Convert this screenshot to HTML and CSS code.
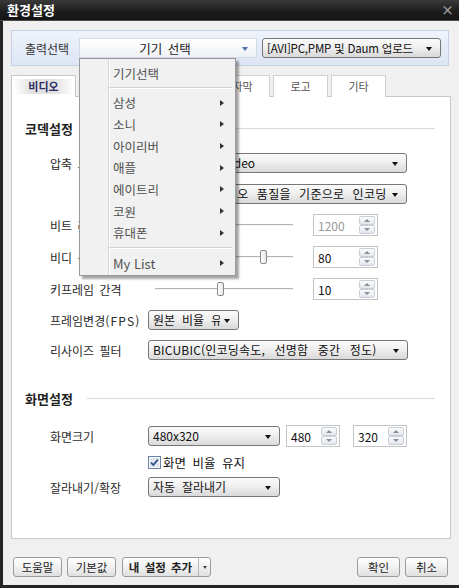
FILE: index.html
```html
<!DOCTYPE html>
<html lang="ko">
<head>
<meta charset="utf-8">
<title>환경설정</title>
<link rel="stylesheet" href="styles.css">
</head>
<body>
<div class="window">
  <div class="titlebar">
    <span class="title">환경설정</span>
    <span class="close">×</span>
  </div>
  <div class="client">
    <div class="outbar">
      <span class="outlabel">출력선택</span>
      <div class="devcombo">
        <span class="devtext">기기 선택</span>
        <i class="bluearrow"></i>
        <div class="menu">
          <div class="mi"><span>기기선택</span></div>
          <div class="msep"></div>
          <div class="mi"><span>삼성</span><i class="sub"></i></div>
          <div class="mi"><span>소니</span><i class="sub"></i></div>
          <div class="mi"><span>아이리버</span><i class="sub"></i></div>
          <div class="mi"><span>애플</span><i class="sub"></i></div>
          <div class="mi"><span>에이트리</span><i class="sub"></i></div>
          <div class="mi"><span>코원</span><i class="sub"></i></div>
          <div class="mi"><span>휴대폰</span><i class="sub"></i></div>
          <div class="msep sep2"></div>
          <div class="mi"><span class="latin">My List</span><i class="sub"></i></div>
        </div>
      </div>
      <div class="combo preset"><span class="ctext ptext">[AVI]PC,PMP 및 Daum 업로드</span><i class="arrow"></i></div>
    </div>

    <div class="tabs">
      <div class="tab sel"><span class="selband">비디오</span></div>
      <div class="tab wide">오디오</div>
      <div class="tab wide">인코딩</div>
      <div class="tab">자막</div>
      <div class="tab">로고</div>
      <div class="tab">기타</div>
    </div>

    <div class="panel">
      <div class="sect"><span class="sname">코덱설정</span><span class="sline"></span></div>

      <div class="row r1">
        <span class="lbl">압축 코덱</span>
        <div class="combo w259"><span class="ctext tight">XviD MPEG4 Video</span><i class="arrow"></i></div>
      </div>
      <div class="row r2">
        <span class="lbl"></span>
        <div class="combo w259"><span class="ctext loose">품질 고정 비디오 품질을 기준으로 인코딩</span><i class="arrow"></i></div>
      </div>
      <div class="row r3">
        <span class="lbl">비트 레이트</span>
        <div class="slider"><div class="track"><i class="thumb t-bit"></i></div></div>
        <div class="spin w65 dis"><span class="sv">1200</span><div class="sbtns"><i class="up"></i><i class="dn"></i></div></div>
      </div>
      <div class="row r3">
        <span class="lbl">비디 품질</span>
        <div class="slider"><div class="track"><i class="thumb t-q"></i></div></div>
        <div class="spin w65"><span class="sv">80</span><div class="sbtns"><i class="up"></i><i class="dn"></i></div></div>
      </div>
      <div class="row r3">
        <span class="lbl">키프레임 간격</span>
        <div class="slider"><div class="track"><i class="thumb t-k"></i></div></div>
        <div class="spin w65"><span class="sv">10</span><div class="sbtns"><i class="up"></i><i class="dn"></i></div></div>
      </div>
      <div class="row r3">
        <span class="lbl">프레임변경<span class="lat">(FPS)</span></span>
        <div class="combo w91"><span class="ctext">원본 비율 유지</span><i class="arrow"></i></div>
      </div>
      <div class="row r3">
        <span class="lbl">리사이즈 필터</span>
        <div class="combo w260"><span class="ctext wide">BICUBIC(인코딩속도, 선명함 중간 정도)</span><i class="arrow"></i></div>
      </div>

      <div class="sect s2"><span class="sname">화면설정</span><span class="sline"></span></div>

      <div class="row r8">
        <span class="lbl">화면크기</span>
        <div class="combo w132"><span class="ctext">480x320</span><i class="arrow"></i></div>
        <div class="spin w54 m6"><span class="sv">480</span><div class="sbtns"><i class="up"></i><i class="dn"></i></div></div>
        <div class="spin w54 m13"><span class="sv">320</span><div class="sbtns"><i class="up"></i><i class="dn"></i></div></div>
      </div>
      <div class="row r9">
        <span class="lbl"></span>
        <span class="chk"><svg width="13" height="13" viewBox="0 0 13 13"><rect x="0.5" y="0.5" width="12" height="12" fill="#f4f6f9" stroke="#6b84a8"/><rect x="2" y="2" width="9" height="9" fill="#dfe6f0"/><path d="M3 6.5 L5.3 9 L10 3.5" fill="none" stroke="#2a4c86" stroke-width="1.8"/></svg></span>
        <span class="chklbl">화면 비율 유지</span>
      </div>
      <div class="row r10">
        <span class="lbl">잘라내기/확장</span>
        <div class="combo w132"><span class="ctext">자동 잘라내기</span><i class="arrow"></i></div>
      </div>
    </div>

    <div class="footer">
      <button class="btn b49">도움말</button>
      <button class="btn b49 g5">기본값</button>
      <button class="btn split g6"><span class="splitmain">내 설정 추가</span><span class="splitarrow"><i class="arrow small"></i></span></button>
      <span class="spacer"></span>
      <button class="btn b43">확인</button>
      <button class="btn b43 g5">취소</button>
    </div>
  </div>
</div>
</body>
</html>
```

FILE: styles.css
```css
* { box-sizing: border-box; }
html, body { margin: 0; padding: 0; }
body {
  width: 459px;
  height: 588px;
  overflow: hidden;
  font-family: "Noto Sans CJK KR", "Noto Sans", sans-serif;
  font-size: 12px;
  color: #222;
}
.window {
  width: 459px;
  height: 588px;
  background: #262626;
  display: flex;
  flex-direction: column;
}
.titlebar {
  height: 21px;
  background: linear-gradient(#3a3a3a, #1c1c1c 60%, #141414);
  display: flex;
  align-items: center;
  justify-content: space-between;
  padding: 0 5px 1px 7px;
  border-bottom: 1px solid #4a4a4a;
}
.title {
  color: #fff;
  font-weight: bold;
  font-size: 13px;
  line-height: 16px;
}
.close {
  color: #9a9a9a;
  font-size: 13px;
  font-weight: bold;
  line-height: 13px;
}
.client {
  flex: 1;
  margin: 0 0 3px 3px;
  background: #f0f0f0;
  display: flex;
  flex-direction: column;
  padding: 9px 8px 0 8px;
}
/* output select bar */
.outbar {
  height: 36px;
  margin-right: 2px;
  border: 1px solid #c6d1e4;
  background: linear-gradient(#eef3fb, #dde6f5);
  display: flex;
  align-items: center;
  padding-left: 13px;
}
.outlabel {
  width: 54px;
  color: #333;
  font-size: 12px;
}
.devcombo {
  position: relative;
  width: 178px;
  height: 20px;
  border: 1px solid #d3dae6;
  background: linear-gradient(#ffffff, #eef1f6);
  display: flex;
  align-items: center;
  padding-right: 8px;
}
.devtext {
  flex: 1;
  text-align: center;
  font-size: 12.5px;
  color: #222;
  padding-left: 8px;
  word-spacing: 2px;
}
.bluearrow {
  width: 0;
  height: 0;
  border-left: 3.5px solid transparent;
  border-right: 3.5px solid transparent;
  border-top: 4px solid #4f6fa6;
  margin-top: 2px;
}
.preset {
  width: 179px;
  margin-left: 5px;
  border-color: #6d6d6d;
}
/* dropdown menu */
.menu {
  position: absolute;
  top: 19px;
  left: -1px;
  width: 157px;
  height: 218px;
  background: linear-gradient(90deg, #f1f1f1 28px, #d9d9d9 28px, #d9d9d9 29px, #ffffff 29px, #ffffff 30px, #f1f1f1 30px);
  border: 1px solid #9a9a9a;
  box-shadow: 3px 3px 2px rgba(0, 0, 0, 0.35);
  padding-top: 3px;
  z-index: 10;
}
.mi {
  height: 21.67px;
  display: flex;
  align-items: center;
  justify-content: space-between;
  padding: 0 11px 0 33px;
  color: #505050;
  font-size: 12.5px;
}
.mi:first-child { height: 22px; }
.latin { font-size: 13px; }
.sub {
  width: 0;
  height: 0;
  border-top: 3.5px solid transparent;
  border-bottom: 3.5px solid transparent;
  border-left: 4px solid #333;
}
.msep {
  height: 8px;
  margin: 0 3px 0 29px;
  background: linear-gradient(transparent 3px, #d4d4d4 3px, #d4d4d4 4px, #ffffff 4px, #ffffff 5px, transparent 5px);
}
.sep2 { height: 9px; }
/* tabs */
.tabs {
  display: flex;
  gap: 3px;
  margin-top: 9px;
  height: 21px;
  position: relative;
  z-index: 1;
}
.tab {
  width: 55px;
  height: 22px;
  border: 1px solid #d0d0d0;
  border-bottom: none;
  background: #fff;
  color: #555;
  font-size: 11px;
  display: flex;
  align-items: center;
  justify-content: center;
  padding-bottom: 1px;
}
.tab.wide { width: 65px; }
.tab.sel {
  width: 65px;
  border-color: #c8c8c8;
}
.selband {
  display: block;
  width: 59px;
  height: 15px;
  line-height: 15px;
  text-align: center;
  font-weight: bold;
  color: #2e2e63;
  background: linear-gradient(90deg, #ffffff, #e2e2e2 30%, #e2e2e2 70%, #ffffff);
}
/* panel */
.panel {
  flex: 1;
  background: #fff;
  border: 1px solid #c8c8c8;
  padding: 23px 0 0 0;
}
.sect {
  display: flex;
  align-items: center;
  height: 16px;
  padding-left: 13px;
  padding-right: 15px;
}
.sname {
  font-weight: bold;
  font-size: 13px;
  color: #222;
}
.sline {
  flex: 1;
  height: 1px;
  background: #dadada;
  margin-left: 14px;
}
.s2 { margin-top: 30px; }
.row {
  display: flex;
  align-items: center;
  padding-left: 38px;
}
.r1 { margin-top: 17px; }
.r2 { margin-top: 11px; }
.r3 { margin-top: 10px; }
.r8 { margin-top: 19px; }
.r9 { margin-top: 9px; height: 13px; }
.r10 { margin-top: 8px; }
.lbl {
  width: 98px;
  flex: none;
  color: #2a2a2a;
  font-size: 12px;
  word-spacing: 2px;
  white-space: nowrap;
  overflow: hidden;
}
.lat { letter-spacing: 1.2px; }
/* combo box */
.combo {
  height: 20px;
  border: 1px solid #777;
  border-radius: 3px;
  background: linear-gradient(#fbfbfb, #f0f0f0 45%, #d9d9d9);
  display: flex;
  align-items: center;
  padding: 0 8px 0 4px;
  overflow: hidden;
  flex: none;
}
.ctext {
  flex: 1;
  white-space: nowrap;
  overflow: hidden;
  font-size: 12px;
  color: #111;
  word-spacing: 3.5px;
  line-height: 18px;
}
.ctext.tight { word-spacing: 0; }
.ctext.loose { word-spacing: 4.5px; letter-spacing: 0.3px; }
.ctext.wide { word-spacing: 6px; letter-spacing: 0.2px; }
.ctext.ptext {
  font-size: 11.5px;
  word-spacing: 0;
  letter-spacing: -0.2px;
}
.arrow {
  flex: none;
  width: 0;
  height: 0;
  border-left: 3.5px solid transparent;
  border-right: 3.5px solid transparent;
  border-top: 4px solid #111;
  margin-left: 4px;
  margin-top: 1px;
}
.arrow.small {
  border-left-width: 2.5px;
  border-right-width: 2.5px;
  border-top-width: 3px;
  border-top-color: #444;
  margin: 0;
}
.w259 { width: 259px; }
.w260 { width: 260px; }
.w91 { width: 91px; }
.w132 { width: 132px; }
/* slider */
.slider {
  width: 165px;
  height: 22px;
  flex: none;
  display: flex;
  align-items: center;
}
.track {
  margin-left: 7px;
  width: 138px;
  height: 2px;
  border-top: 1px solid #b4b4b4;
  border-bottom: 1px solid #f4f4f4;
  position: relative;
}
.thumb {
  position: absolute;
  top: -7px;
  width: 7px;
  height: 14px;
  border: 1px solid #8a8a8a;
  border-radius: 2px;
  background: linear-gradient(90deg, #ffffff, #e8e8e8);
}
.t-bit { left: 40px; }
.t-q { left: 105px; }
.t-k { left: 62px; }
/* spin box */
.spin {
  height: 22px;
  border: 1px solid #c4c4c4;
  background: #fff;
  display: flex;
  align-items: center;
  padding: 0 2px 0 4px;
  flex: none;
}
.sv {
  flex: 1;
  font-size: 12px;
  color: #111;
}
.dis .sv { color: #9a9a9a; }
.w65 { width: 65px; }
.w54 { width: 54px; }
.m6 { margin-left: 6px; }
.m13 { margin-left: 13px; }
.sbtns {
  display: flex;
  flex-direction: column;
  width: 16px;
}
.sbtns i {
  height: 9px;
  border: 1px solid #c9cfd8;
  border-radius: 2px;
  background: linear-gradient(#fbfcfd, #e3e7ec);
  display: flex;
  align-items: center;
  justify-content: center;
}
.sbtns i::after {
  content: "";
  width: 0;
  height: 0;
  border-left: 3px solid transparent;
  border-right: 3px solid transparent;
}
.sbtns .up::after { border-bottom: 3px solid #8a9098; }
.sbtns .dn::after { border-top: 3px solid #8a9098; }
/* checkbox */
.chk {
  width: 13px;
  height: 13px;
  display: block;
  flex: none;
}
.chk svg { display: block; }
.chklbl {
  margin-left: 2px;
  font-size: 12.5px;
  color: #111;
  word-spacing: 3px;
}
/* footer */
.footer {
  height: 46px;
  flex: none;
  display: flex;
  align-items: flex-start;
  padding: 18px 3px 0 2px;
}
.btn {
  height: 20px;
  border: 1px solid #9c9c9c;
  border-radius: 3px;
  background: linear-gradient(#ffffff, #f1f1f1 50%, #e0e0e0);
  font-family: "Noto Sans CJK KR", sans-serif;
  font-size: 11.5px;
  color: #222;
  padding: 0;
  display: flex;
  align-items: center;
  justify-content: center;
}
.b49 { width: 49px; }
.b43 { width: 43px; }
.g5 { margin-left: 5px; }
.g6 { margin-left: 6px; }
.split {
  width: 89px;
  justify-content: flex-start;
}
.splitmain {
  width: 76px;
  height: 100%;
  display: flex;
  align-items: center;
  justify-content: center;
  font-weight: bold;
  font-size: 11.5px;
  word-spacing: 2px;
  border-right: 1px solid #b8b8b8;
}
.splitarrow {
  flex: 1;
  display: flex;
  align-items: center;
  justify-content: center;
}
.spacer { flex: 1; }
```
